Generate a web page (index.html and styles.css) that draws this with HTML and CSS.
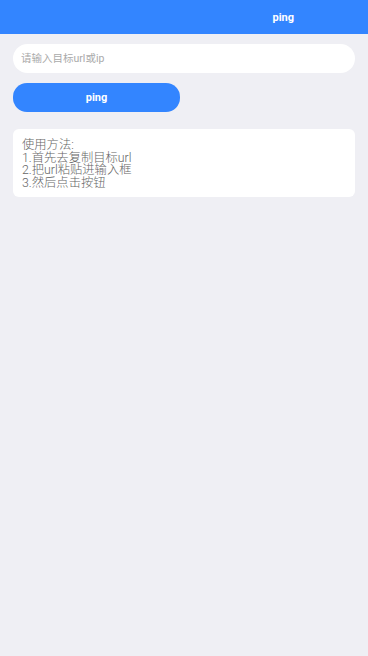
FILE: index.html
```html
<!DOCTYPE html>
<html lang="zh">
<head>
<meta charset="utf-8">
<link rel="stylesheet" href="styles.css">
</head>
<body>
<header class="topbar"><span class="title">ping</span></header>
<main class="content">
  <div class="input-wrap"><input class="url-input" type="text" placeholder="请输入目标url或ip"></div>
  <button class="ping-btn">ping</button>
  <section class="help">
    <p>使用方法:</p>
    <p>1.首先去复制目标url</p>
    <p>2.把url粘贴进输入框</p>
    <p>3.然后点击按钮</p>
  </section>
</main>
</body>
</html>
```
FILE: styles.css
```css
html, body {
  margin: 0;
  padding: 0;
  background: #efeff4;
  font-family: Roboto, "Noto Sans CJK SC", sans-serif;
}
.topbar {
  height: 34px;
  background: #3385ff;
  display: flex;
  align-items: center;
  justify-content: flex-end;
  padding-right: 74px;
}
.title {
  color: #fff;
  font-weight: bold;
  font-size: 11px;
}
.content {
  padding: 10px 13px;
  display: flex;
  flex-direction: column;
}
.input-wrap {
  height: 29px;
  background: #fff;
  border-radius: 15px;
  display: flex;
  align-items: center;
  padding: 0 8px;
}
.url-input {
  border: none;
  outline: none;
  width: 100%;
  background: transparent;
  font-family: Roboto, "Noto Sans CJK SC", sans-serif;
  font-size: 10.5px;
  color: #333;
  padding: 0;
}
.url-input::placeholder { color: #aaa; }
.ping-btn {
  margin-top: 10px;
  width: 167px;
  height: 29px;
  border: none;
  border-radius: 14px;
  background: #3385ff;
  color: #fff;
  font-family: Roboto, "Noto Sans CJK SC", sans-serif;
  font-weight: bold;
  font-size: 11px;
  padding: 0;
}
.help {
  margin-top: 17px;
  background: #fff;
  border-radius: 6px;
  padding: 10px 9px 7px;
  color: #666;
  font-size: 12.3px;
  line-height: 12.7px;
  font-weight: 300;
}
.help p { margin: 0; }
```
